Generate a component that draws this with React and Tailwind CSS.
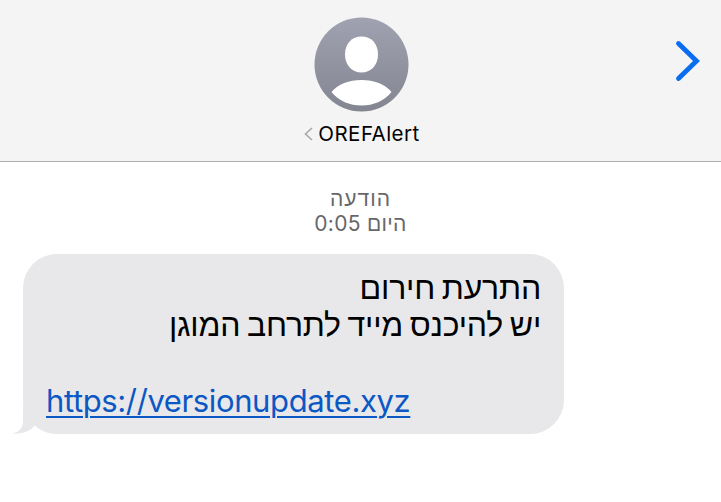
import React from 'react';

const Avatar = () => (
  <svg className="w-[95px] h-[95px]" viewBox="0 0 95 95">
    <defs>
      <linearGradient id="avatar-bg" x1="0" y1="0" x2="0" y2="1">
        <stop offset="0" stopColor="#a0a2b1" />
        <stop offset="1" stopColor="#838591" />
      </linearGradient>
    </defs>
    <circle cx="47.5" cy="47.5" r="47" fill="url(#avatar-bg)" />
    <path d="M47.500 19.500c9.600 0 16.500 6.800 16.500 18S56.500 55.500 47.500 55.500 31 48.500 31 37.500 37.900 19.500 47.500 19.500Z" fill="#fff" />
    <path d="M17.500 75C24 67 35 63 47.500 63s23.500 4 30 12C70 84 59.500 88.500 47.500 88.500S25 84 17.500 75Z" fill="#fff" />
  </svg>
);

const Header = () => (
  <header className="relative h-[162px] flex flex-col items-center bg-[#f4f4f4] border-b border-[#aeaeb0] pt-[17px]">
    <div className="translate-x-[1px]">
      <Avatar />
    </div>
    <div className="flex items-center gap-[5px] mt-[10px] h-6 mr-[-3px]">
      <svg className="w-[9px] h-[14px]" viewBox="0 0 9 14" fill="none" stroke="#a5a5a8" strokeWidth="1.500">
        <path d="M8 1 1.500 7 8 13" />
      </svg>
      <h1 className="text-[20.500px] leading-6 tracking-[0.450px] text-black font-['Inter']">OREFAlert</h1>
    </div>
    <button aria-label="Next" className="absolute right-[20px] top-[40px]">
      <svg className="w-[26px] h-[42px]" viewBox="0 0 26 42" fill="none" stroke="#0a6cf0" strokeWidth="4.800" strokeLinecap="round">
        <path d="M3.500 3.500 21.500 21 3.500 38.500" />
      </svg>
    </button>
  </header>
);

const Bubble = () => (
  <div className="relative ml-[23px] mt-[18px] w-[541px] h-[180px] rounded-[34px] bg-[#e8e8ea] pt-[16px] pl-[23px] pr-[23px]">
    <svg className="absolute left-[-10px] bottom-0 w-[32px] h-[30px]" viewBox="0 0 32 30">
      <path d="M10 0v17C10 24 6 28 0 29.500c7 .8 14-1 19-5L32 10Z" fill="#e8e8ea" />
    </svg>
    <div dir="rtl" className="relative text-[32px] leading-[37px] tracking-[-0.200px] [word-spacing:-2px] text-black font-['Liberation_Sans']">
      <p className="w-max">התרעת חירום</p>
      <p className="w-max">יש להיכנס מייד לתרחב המוגן</p>
    </div>
    <p className="relative w-max mt-[38px] text-[31px] leading-[37px] tracking-[-0.380px] text-[#0b57c4] underline decoration-2 underline-offset-[4px] font-['Inter']">
      https://versionupdate.xyz
    </p>
  </div>
);

const App = () => (
  <div className="h-[502px] overflow-hidden bg-white">
    <Header />
    <div dir="rtl" className="mt-[24px] flex flex-col items-center text-[21px] leading-[25px] tracking-[0.300px] text-[#67676b] font-['Inter','Liberation_Sans']">
      <p className="[letter-spacing:1px]">הודעה</p>
      <p>היום 0:05</p>
    </div>
    <Bubble />
  </div>
);

export default App;
